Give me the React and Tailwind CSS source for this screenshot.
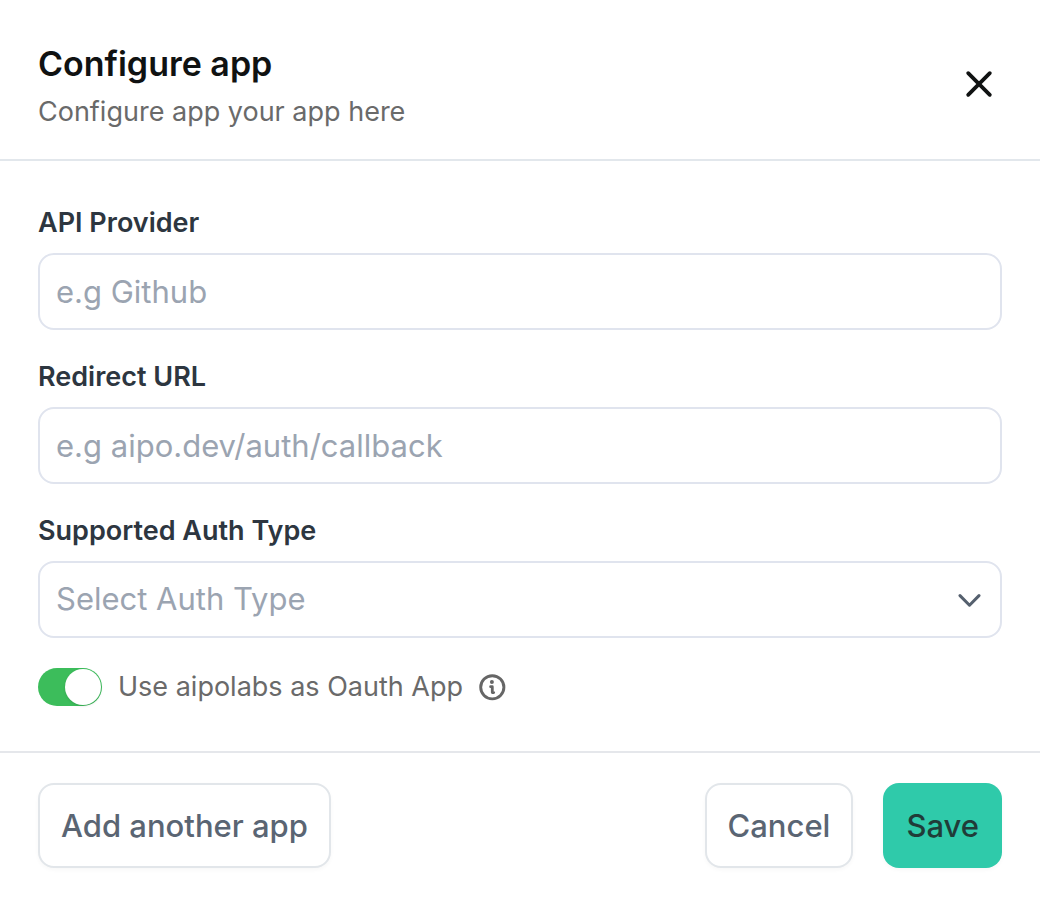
import React, { useState } from "react";

const inputClass =
  "block h-[77px] w-full rounded-2xl border-2 border-[#e0e4ee] bg-white px-4 text-[31px] text-[#344054] placeholder:text-[#9ba4b1] outline-none";
const labelClass = "text-[27px] leading-[40px] font-semibold text-[#2d3640]";
const outlineButtonClass =
  "h-[85px] rounded-2xl border-2 border-[#e2e6ea] bg-white px-[21px] pt-0.5 text-[31px] font-medium text-[#5a6573] shadow-[0_2px_4px_rgba(16,24,40,0.03)]";

export default function App() {
  const [on, setOn] = useState(true);
  const [auth, setAuth] = useState("");
  return (
    <main className="flex min-h-screen flex-col bg-white font-['Inter',sans-serif]">
      <header className="flex items-center justify-between border-b-2 border-[#e2e7ec] px-[38px] pt-9 pb-[27px]">
        <div>
          <h1 className="text-[34px] leading-[56px] font-semibold text-[#101212]">Configure app</h1>
          <p className="text-[27px] leading-[40px] text-[#6a6a6a]">Configure app your app here</p>
        </div>
        <button type="button" aria-label="Close" className="p-2">
          <svg className="size-[30px]" viewBox="0 0 30 30" fill="none" stroke="#101212" strokeWidth="3.8" strokeLinecap="round">
            <path d="M4.2 4.2 25.8 25.8M25.8 4.2 4.2 25.8" />
          </svg>
        </button>
      </header>
      <form id="configure" className="flex flex-1 flex-col px-[38px] pt-[42px]" onSubmit={(e) => e.preventDefault()}>
        <div className="flex flex-col gap-[27px]">
          <div className="flex flex-col gap-[10px]">
            <label htmlFor="provider" className={labelClass}>API Provider</label>
            <input id="provider" type="text" placeholder="e.g Github" className={inputClass} />
          </div>
          <div className="flex flex-col gap-[10px]">
            <label htmlFor="redirect" className={labelClass}>Redirect URL</label>
            <input id="redirect" type="text" placeholder="e.g aipo.dev/auth/callback" className={inputClass} />
          </div>
          <div className="flex flex-col gap-[10px]">
            <label htmlFor="auth" className={labelClass}>Supported Auth Type</label>
            <div className="relative">
              <select
                id="auth"
                value={auth}
                onChange={(e) => setAuth(e.target.value)}
                className="block h-[77px] w-full appearance-none rounded-2xl border-2 border-[#e0e4ee] bg-white px-4 text-[31px] text-[#9ba4b1] outline-none"
              >
                <option value="">Select Auth Type</option>
              </select>
              <svg className="pointer-events-none absolute top-1/2 right-5 h-4 w-6 -translate-y-1/2" viewBox="0 0 24 16" fill="none" stroke="#55606e" strokeWidth="3" strokeLinecap="round" strokeLinejoin="round">
                <path d="M2 3.6 11.5 13.2 21 3.6" />
              </svg>
            </div>
          </div>
        </div>
        <div className="mt-[29px] flex items-center gap-4 pb-11">
          <label className="flex items-center gap-4">
            <input type="checkbox" role="switch" checked={on} onChange={() => setOn(!on)} className="peer sr-only" />
            <span className="flex h-[38px] w-16 items-center rounded-full bg-[#cbd2d9] p-px peer-checked:justify-end peer-checked:bg-[#3cbd5b]">
              <span className="size-9 rounded-full bg-white shadow-sm" />
            </span>
            <span className="text-[27px] leading-[40px] text-[#6a6a6a]">Use aipolabs as Oauth App</span>
          </label>
          <button type="button" aria-label="More information">
            <svg className="size-[27px]" viewBox="0 0 27 27" fill="none" stroke="#666666" strokeWidth="2.9" strokeLinecap="round" strokeLinejoin="round">
              <circle cx="13.3" cy="13.3" r="11.6" />
              <path d="M11.6 12.7H13.3V18.6H14.7" strokeWidth="2.8" />
              <circle cx="12.9" cy="8" r="2" fill="#666666" stroke="none" />
            </svg>
          </button>
        </div>
      </form>
      <footer className="flex items-center gap-[30px] border-t-2 border-[#e5e7eb] px-[38px] pt-[30px] pb-[38px]">
        <button type="button" className={`mr-auto ${outlineButtonClass}`}>Add another app</button>
        <button type="button" className={outlineButtonClass}>Cancel</button>
        <button type="submit" form="configure" className="h-[85px] rounded-2xl bg-[#2fcaaa] px-[23px] pt-0.5 text-[31px] font-medium text-[#203c38] shadow-[0_2px_4px_rgba(16,24,40,0.03)]">Save</button>
      </footer>
    </main>
  );
}
